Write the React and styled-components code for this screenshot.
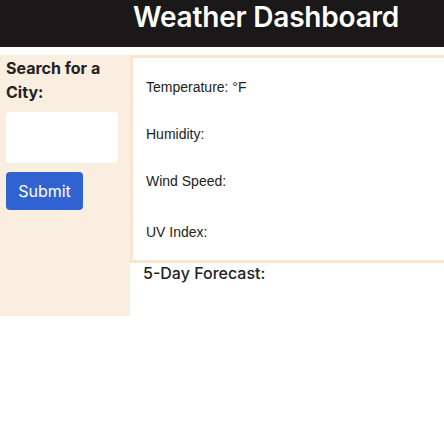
import React from "react";
import styled, { createGlobalStyle } from "styled-components";

const GlobalStyle = createGlobalStyle`
  body {
    margin: 0;
    font-family: "Liberation Sans", Arial, sans-serif;
    background: #fff;
  }
`;

const Header = styled.header`
  height: 47px;
  background: #1a1818;
  color: #fff;
  padding: 0 0 0 133px;
  box-sizing: border-box;
`;

const Title = styled.h1`
  margin: 0;
  font-family: Inter, "Noto Sans", sans-serif;
  font-size: 28px;
  line-height: 34px;
  font-weight: 600;
  letter-spacing: -0.2px;
`;

const Layout = styled.main`
  display: grid;
  grid-template-columns: 130px 1fr;
  margin-top: 8px;
  align-items: start;
`;

const SideBar = styled.aside`
  background: #faeee0;
  height: 261px;
  padding: 1px 6px;
  box-sizing: border-box;
`;

const Label = styled.label`
  display: block;
  font-family: Inter, "Noto Sans", sans-serif;
  font-weight: 700;
  font-size: 16px;
  line-height: 24px;
  color: #222;
`;

const CityInput = styled.input`
  display: block;
  width: 112px;
  height: 51px;
  margin-top: 8px;
  border: none;
  border-radius: 4px;
  background: #fff;
  box-sizing: border-box;
`;

const SubmitButton = styled.button`
  display: block;
  margin-top: 9px;
  width: 77px;
  height: 38px;
  border: none;
  border-radius: 4px;
  background: #3063d1;
  color: #fff;
  font-family: Inter, "Noto Sans", sans-serif;
  font-size: 16px;
  padding: 0;
`;

const RightColumn = styled.section`
  display: flex;
  flex-direction: column;
`;

const CurrentPanel = styled.div`
  border: 3px solid #fbe5cf;
  border-right: none;
  height: 208px;
  box-sizing: border-box;
  padding: 21px 0 0 13px;
  display: flex;
  flex-direction: column;
`;

const Stat = styled.p`
  margin: ${({ $gap }) => $gap}px 0 0;
  font-size: 14px;
  line-height: 16px;
  color: #222;
`;

const ForecastTitle = styled.h2`
  margin: 0 0 0 13px;
  font-family: Inter, "Noto Sans", sans-serif;
  font-size: 16px;
  font-weight: 500;
  line-height: 20px;
  color: #222;
`;

const stats = [
  { label: "Temperature: °F", gap: 0 },
  { label: "Humidity:", gap: 31 },
  { label: "Wind Speed:", gap: 31 },
  { label: "UV Index:", gap: 35 },
];

export default function App() {
  return (
    <>
      <GlobalStyle />
      <Header>
        <Title>Weather Dashboard</Title>
      </Header>
      <Layout>
        <SideBar>
          <Label htmlFor="city">Search for a City:</Label>
          <CityInput id="city" type="text" />
          <SubmitButton>Submit</SubmitButton>
        </SideBar>
        <RightColumn>
          <CurrentPanel>
            {stats.map((s) => (
              <Stat key={s.label} $gap={s.gap}>
                {s.label}
              </Stat>
            ))}
          </CurrentPanel>
          <ForecastTitle>5-Day Forecast:</ForecastTitle>
        </RightColumn>
      </Layout>
    </>
  );
}
